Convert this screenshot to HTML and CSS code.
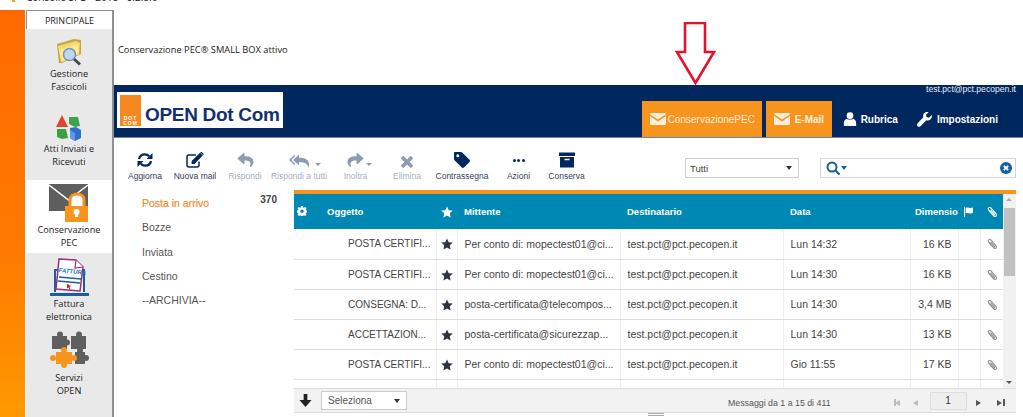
FILE: index.html
```html
<!DOCTYPE html>
<html lang="en">
<head>
  <meta charset="UTF-8">
  <title>Conservazione PEC</title>
  <link rel="stylesheet" href="styles.css">
</head>
<body>
  <svg class="sprites" xmlns="http://www.w3.org/2000/svg">
    <symbol id="i-env" viewBox="0 0 16 12"><path d="M0 1.2C0 .5.5 0 1.2 0h13.6c.7 0 1.2.5 1.2 1.2L8 6.6z"/><path d="M0 3v7.8c0 .7.5 1.2 1.2 1.2h13.6c.7 0 1.2-.5 1.2-1.2V3L8 8.4z"/></symbol>
    <symbol id="i-user" viewBox="0 0 16 16"><circle cx="8" cy="4.2" r="3.8"/><path d="M1 16v-3.5C1 9.500 3 8 4.500 7.600 6 9 10 9 11.500 7.600 13 8 15 9.500 15 12.500V16z"/></symbol>
    <symbol id="i-wrench" viewBox="0 0 16 16"><path d="M15.800 3.200 12.800 6l-2.600-.6-.7-2.500L12.400.3C10.500-.4 8.300.2 7.300 1.700 6.400 3 6.400 4.400 6.800 5.600L.6 12.100c-.8.900-.8 2.200 0 3 .9.900 2.200.9 3.100 0l6.300-6.300c1.600.5 3.300.1 4.500-1.100 1.200-1.200 1.600-3 1.300-4.500z"/></symbol>
    <symbol id="i-refresh" viewBox="0 0 16 16"><path fill="none" stroke="currentColor" stroke-width="2.300" d="M2 7c.6-2.800 2.900-4.700 5.800-4.700 1.800 0 3.300.7 4.300 2M14 9c-.6 2.800-2.900 4.700-5.800 4.700-1.800 0-3.300-.7-4.300-2"/><path d="M15.500 1v6h-6zM.5 15V9h6z"/></symbol>
    <symbol id="i-edit" viewBox="0 0 18 16"><path fill="none" stroke="currentColor" stroke-width="1.500" d="M13 9.500V13c0 1.100-.8 1.900-1.900 1.900H3C1.900 14.900 1 14 1 13V5c0-1.100.9-1.900 2-1.900h7"/><path d="M14 .8l2.800 2.800L8.500 12H5.600V9zM14.800 0c.4-.2.700-.2 1 0l1.700 1.700c.3.3.3.7 0 1l-.5.400-2.700-2.700z"/></symbol>
    <symbol id="i-reply" viewBox="0 0 512 512"><path d="M8.309 189.836L184.313 37.851C199.719 24.546 224 35.347 224 56.015v80.053c160.629 1.839 288 34.032 288 186.258 0 61.441-39.581 122.309-83.333 154.132-13.653 9.931-33.111-2.533-28.077-18.631 45.344-145.012-21.507-183.51-176.59-185.742V360c0 20.7-24.3 31.453-39.687 18.164l-176.004-152c-11.071-9.562-11.086-26.753 0-36.328z"/></symbol>
    <symbol id="i-replyall" viewBox="0 0 20 14"><path d="M6 .8v1.800L2.400 6 6 9.400v1.800L0 6zM10 .8v3C15.800 3.800 20 5.400 20 10.500c0 1.400-.5 2.500-1.200 3.500.7-4.100-2.600-5.800-8.800-5.800v3L4 6z"/></symbol>
    <symbol id="i-times" viewBox="0 0 12 12"><path d="M3 .4 6 3.400 9 .4c.4-.4 1-.4 1.400 0l1.200 1.200c.4.400.4 1 0 1.400L8.600 6l3 3c.4.400.4 1 0 1.400l-1.200 1.200c-.4.400-1 .4-1.400 0l-3-3-3 3c-.4.400-1 .4-1.400 0L.4 10.400c-.4-.4-.4-1 0-1.400l3-3-3-3c-.4-.4-.4-1 0-1.400L1.600.4C2 0 2.600 0 3 .4z"/></symbol>
    <symbol id="i-tag" viewBox="0 0 16 16"><path fill-rule="evenodd" d="M1 0h6c.5 0 .9.200 1.200.5l7.300 7.300c.6.600.6 1.600 0 2.200l-5.500 5.500c-.6.600-1.600.6-2.200 0L.5 8.200C.2 7.900 0 7.500 0 7V1c0-.6.400-1 1-1zM3.800 2.300a1.500 1.500 0 1 0 0 3 1.500 1.500 0 0 0 0-3z"/></symbol>
    <symbol id="i-archive" viewBox="0 0 16 16"><path d="M0 .5h16v3.500H0zM1 5h14v10.500H1zM5.500 6.800v1.500h5V6.800z" fill-rule="evenodd"/></symbol>
    <symbol id="i-star" viewBox="0 0 16 16"><path d="M8 .5l2.300 5 5.400.6-4 3.700 1.100 5.400L8 12.500l-4.800 2.700 1.100-5.400-4-3.700 5.400-.6z"/></symbol>
    <symbol id="i-clip" viewBox="0 0 16 16"><path fill="none" stroke="currentColor" stroke-width="1.500" d="M3.500 5.500 10 13c1 1.200 2.400 1.300 3.300.5.900-.8.800-2.100-.1-3.200L6.500 2.500C5.800 1.700 4.700 1.500 3.800 2.200 2.900 2.900 2.800 4 3.500 4.900l6.200 7.200c.4.500 1 .6 1.400.2.400-.3.400-.9 0-1.400L6 5"/></symbol>
    <symbol id="i-cog" viewBox="0 0 16 16"><path fill-rule="evenodd" d="M6.500 0h3l.4 2.200 1.300.6L13.100 1.500l2.100 2.100-1.300 1.900.6 1.300 2.200.4v3l-2.200.4-.6 1.300 1.300 1.900-2.100 2.100-1.900-1.300-1.300.6-.4 2.200h-3l-.4-2.200-1.300-.6-1.900 1.300L.8 13.900l1.300-1.900-.6-1.300L-.7 10.300v-3l2.200-.4.600-1.300L.8 3.600l2.100-2.100 1.900 1.300 1.300-.6zM8 5.500a2.800 2.800 0 1 0 0 5.600 2.800 2.800 0 0 0 0-5.600z"/></symbol>
    <symbol id="i-flag" viewBox="0 0 16 14"><path d="M0 0h1.500v14H0zM2.500 1c3-1.500 5.500 1 10.500-.5v8c-5 1.500-7.500-1-10.500.5z"/></symbol>
    <symbol id="i-down" viewBox="0 0 14 14"><path d="M5 0h4v6.500h4.500L7 14 .5 6.500H5z"/></symbol>
  </svg>

  <div class="titlebar">
    <span class="title-icon"></span>
    <span class="title-text">Consolle SFO - 2018 - 6.2.8.0</span>
  </div>

  <div class="app">
    <div class="stripe"></div>

    <nav class="sidebar">
      <div class="side-tab">PRINCIPALE</div>

      <a class="side-item side-item-tall">
        <svg class="side-icon" width="27" height="27" viewBox="0 0 27 27">
          <path d="M1 5 18 0l7 1v14L6 24H3z" fill="#c9a53c"/>
          <path d="M2 7 20 2l4 2-1 11L5 23z" fill="#f6d976"/>
          <path d="M3 11 22 5 23 15 6 23z" fill="#fbe89a"/>
          <circle cx="13.500" cy="15.500" r="6" fill="#bcd7ef" stroke="#7c93ad" stroke-width="1.500"/>
          <path d="M18 20l6 5.500" stroke="#444a55" stroke-width="3"/>
        </svg>
        <span>Gestione<br>Fascicoli</span>
      </a>

      <a class="side-item side-item-tall">
        <svg class="side-icon" width="26" height="26" viewBox="0 0 26 26">
          <path d="M6 0l6 12H0z" fill="#e2452f"/>
          <path d="M13 2h9l2 9-5 1-6-3z" fill="#3da64a"/>
          <path d="M1 14h9l2 9-6 1-5-2z" fill="#37a33f"/>
          <path d="M14 13l6-1 5 3v8l-6 3-5-3z" fill="#2f6fc9"/>
          <path d="M14 15l5 3v8l-5-3z" fill="#5c9be6"/>
        </svg>
        <span>Atti Inviati e<br>Ricevuti</span>
      </a>

      <a class="side-item side-item-active">
        <svg class="side-icon" width="40" height="38" viewBox="0 0 40 38">
          <path d="M0 0h39v27H0z" fill="#5e5e5e"/>
          <path d="M0 1l19.500 15L39 1" fill="none" stroke="#fff" stroke-width="1.500"/>
          <path d="M21 23v-7c0-8 14-8 14 0v7" fill="#fff" stroke="#f7941d" stroke-width="3"/>
          <rect x="16" y="22" width="23" height="16" fill="#f7941d"/>
          <circle cx="27.500" cy="28" r="3" fill="#fff"/>
          <path d="M26.300 29h2.400l.5 4h-3.400z" fill="#fff"/>
        </svg>
        <span>Conservazione<br>PEC</span>
      </a>

      <a class="side-item">
        <svg class="side-icon" width="39" height="38" viewBox="0 0 39 38">
          <path d="M5 34V12h29v22" fill="#eaf1f8" stroke="#1b5f9e" stroke-width="2"/>
          <path d="M0 35h39v3H0z" fill="#1b5f9e"/>
          <path d="M9 1l17 1 7 7-3 24-24-2z" fill="#fff" stroke="#a02a7c" stroke-width="1.500"/>
          <path d="M26 2l-1 8 8-1" fill="#fff" stroke="#a02a7c" stroke-width="1.200"/>
          <text x="8.500" y="14" class="fattura-word" transform="rotate(6 8 14)">FATTURA</text>
          <path d="M9 19l22 2M8 23l22 2" stroke="#1b5f9e" stroke-width="1.500"/>
          <path d="M17 26l4 2-1.500 1 1 2-1 .5-1-2-1.500 1z" fill="#c22"/>
        </svg>
        <span>Fattura<br>elettronica</span>
      </a>

      <a class="side-item">
        <svg class="side-icon side-icon-puzzle" width="39" height="37" viewBox="0 0 39 37">
          <g fill="#5f5f5f">
            <rect x="2" y="5" width="15" height="13"/>
            <circle cx="10" cy="3.500" r="3"/>
            <circle cx="17" cy="11.500" r="3"/>
            <rect x="21" y="5" width="15" height="13"/>
            <circle cx="29" cy="3.500" r="3"/>
            <rect x="25" y="21" width="10" height="12"/>
            <circle cx="30" cy="19.500" r="3"/>
            <circle cx="36" cy="27" r="3"/>
          </g>
          <g fill="#f7941d">
            <rect x="6" y="21" width="16" height="12"/>
            <circle cx="14" cy="19" r="3"/>
            <circle cx="3" cy="27" r="3"/>
            <circle cx="24" cy="27" r="3"/>
            <circle cx="14" cy="34" r="3"/>
          </g>
        </svg>
        <span>Servizi<br>OPEN</span>
      </a>
    </nav>

    <main class="main">
      <div class="notice">Conservazione PEC® SMALL BOX attivo</div>

      <svg class="red-arrow" width="41" height="64" viewBox="0 0 41 64">
        <path d="M10 1h20v29h9L20.500 61 2 30h8z" fill="#fff" stroke="#e8112d" stroke-width="2.600"/>
      </svg>

      <header class="topbar">
        <div class="logo">
          <div class="logo-mark">
            <span>DOT</span>
            <span>COM</span>
          </div>
          <span class="logo-name">OPEN Dot Com</span>
        </div>
        <div class="topbar-right">
          <div class="account">test.pct@pct.pecopen.it</div>
          <div class="tabs">
            <a class="tab tab-on tab-pec"><svg width="16" height="12"><use href="#i-env"/></svg>ConservazionePEC</a>
            <a class="tab tab-on tab-mail"><svg width="16" height="12"><use href="#i-env"/></svg>E-Mail</a>
            <a class="tab tab-book"><svg width="14" height="14"><use href="#i-user"/></svg>Rubrica</a>
            <a class="tab tab-set"><svg width="15" height="15"><use href="#i-wrench"/></svg>Impostazioni</a>
          </div>
        </div>
      </header>

      <div class="toolbar">
        <div class="tools">
          <a class="tool"><svg width="16" height="16"><use href="#i-refresh"/></svg>Aggiorna</a>
          <a class="tool"><svg width="18" height="16"><use href="#i-edit"/></svg>Nuova mail</a>
          <a class="tool tool-off"><svg width="17" height="16"><use href="#i-reply"/></svg>Rispondi</a>
          <a class="tool tool-off tool-more"><svg width="20" height="14"><use href="#i-replyall"/></svg>Rispondi a tutti</a>
          <a class="tool tool-off tool-more"><svg class="flip" width="17" height="16"><use href="#i-reply"/></svg>Inoltra</a>
          <a class="tool tool-off"><svg width="12" height="12"><use href="#i-times"/></svg>Elimina</a>
          <a class="tool"><svg width="16" height="16"><use href="#i-tag"/></svg>Contrassegna</a>
          <a class="tool"><span class="dots"><i></i><i></i><i></i></span>Azioni</a>
          <a class="tool"><svg width="16" height="16"><use href="#i-archive"/></svg>Conserva</a>
        </div>
        <div class="filter-select">Tutti<span class="caret"></span></div>
        <div class="search">
          <svg width="14" height="14" viewBox="0 0 14 14"><circle cx="6" cy="6" r="4.500" fill="none" stroke="#17609c" stroke-width="2"/><path d="M9 9l4.500 4.500" stroke="#17609c" stroke-width="2.200"/></svg>
          <span class="caret caret-blue"></span>
          <svg class="search-clear" width="12" height="12" viewBox="0 0 12 12"><circle cx="6" cy="6" r="6" fill="#17609c"/><path d="M3.800 3.800l4.400 4.400M8.200 3.800 3.800 8.200" stroke="#fff" stroke-width="1.800"/></svg>
        </div>
      </div>

      <div class="content">
        <ul class="folders">
          <li class="folder-on">Posta in arrivo<b>370</b></li>
          <li>Bozze</li>
          <li>Inviata</li>
          <li>Cestino</li>
          <li>--ARCHIVIA--</li>
        </ul>

        <section class="mail">
          <div class="mail-body">
            <div class="mail-table">
              <table>
                <colgroup>
                  <col class="c-subject"><col class="c-star"><col class="c-from"><col class="c-to"><col class="c-date"><col class="c-size"><col class="c-flag"><col class="c-clip">
                </colgroup>
                <thead>
                  <tr>
                    <th class="th-subject"><svg class="th-cog" width="10" height="10"><use href="#i-cog"/></svg>Oggetto</th>
                    <th class="center"><svg width="12" height="12"><use href="#i-star"/></svg></th>
                    <th>Mittente</th>
                    <th>Destinatario</th>
                    <th>Data</th>
                    <th class="th-size">Dimensioni</th>
                    <th class="center"><svg width="11" height="10"><use href="#i-flag"/></svg></th>
                    <th class="center"><svg class="clip" width="12" height="12"><use href="#i-clip"/></svg></th>
                  </tr>
                </thead>
                <tbody>
                  <tr>
                    <td class="subject">POSTA CERTIFI...</td>
                    <td class="center"><svg width="12" height="12"><use href="#i-star"/></svg></td>
                    <td>Per conto di: mopectest01@ci...</td>
                    <td>test.pct@pct.pecopen.it</td>
                    <td>Lun 14:32</td>
                    <td class="size">16 KB</td>
                    <td></td>
                    <td class="center"><svg class="clip" width="12" height="12"><use href="#i-clip"/></svg></td>
                  </tr>
                  <tr>
                    <td class="subject">POSTA CERTIFI...</td>
                    <td class="center"><svg width="12" height="12"><use href="#i-star"/></svg></td>
                    <td>Per conto di: mopectest01@ci...</td>
                    <td>test.pct@pct.pecopen.it</td>
                    <td>Lun 14:30</td>
                    <td class="size">16 KB</td>
                    <td></td>
                    <td class="center"><svg class="clip" width="12" height="12"><use href="#i-clip"/></svg></td>
                  </tr>
                  <tr>
                    <td class="subject">CONSEGNA: D...</td>
                    <td class="center"><svg width="12" height="12"><use href="#i-star"/></svg></td>
                    <td>posta-certificata@telecompos...</td>
                    <td>test.pct@pct.pecopen.it</td>
                    <td>Lun 14:30</td>
                    <td class="size">3,4 MB</td>
                    <td></td>
                    <td class="center"><svg class="clip" width="12" height="12"><use href="#i-clip"/></svg></td>
                  </tr>
                  <tr>
                    <td class="subject">ACCETTAZION...</td>
                    <td class="center"><svg width="12" height="12"><use href="#i-star"/></svg></td>
                    <td>posta-certificata@sicurezzap...</td>
                    <td>test.pct@pct.pecopen.it</td>
                    <td>Lun 14:30</td>
                    <td class="size">13 KB</td>
                    <td></td>
                    <td class="center"><svg class="clip" width="12" height="12"><use href="#i-clip"/></svg></td>
                  </tr>
                  <tr>
                    <td class="subject">POSTA CERTIFI...</td>
                    <td class="center"><svg width="12" height="12"><use href="#i-star"/></svg></td>
                    <td>Per conto di: mopectest01@ci...</td>
                    <td>test.pct@pct.pecopen.it</td>
                    <td>Gio 11:55</td>
                    <td class="size">17 KB</td>
                    <td></td>
                    <td class="center"><svg class="clip" width="12" height="12"><use href="#i-clip"/></svg></td>
                  </tr>
                  <tr>
                    <td></td><td></td><td></td><td></td><td></td><td></td><td></td><td></td>
                  </tr>
                </tbody>
              </table>
            </div>
            <div class="scroll">
              <span class="scroll-up"></span>
              <span class="scroll-thumb"></span>
              <span class="scroll-down"></span>
            </div>
          </div>

          <div class="mail-foot">
            <svg class="foot-down" width="13" height="13"><use href="#i-down"/></svg>
            <div class="foot-select">Seleziona<span class="caret"></span></div>
            <div class="foot-count">Messaggi da 1 a 15 di 411</div>
            <div class="pager">
              <span class="pg pg-off pg-first"></span>
              <span class="pg pg-off pg-prev"></span>
              <span class="pg-input">1</span>
              <span class="pg pg-next"></span>
              <span class="pg pg-last"></span>
            </div>
          </div>
          <div class="grip"></div>
        </section>
      </div>
    </main>
  </div>
</body>
</html>
```

FILE: styles.css
```css
* {
  box-sizing: border-box;
}
html, body {
  height: 100%;
}
body {
  margin: 0;
  overflow: hidden;
  font-family: "Liberation Sans", Arial, sans-serif;
  font-size: 10px;
  color: #444;
  background-color: white;
}
.sprites {
  display: none;
}
svg {
  fill: currentColor;
  display: block;
}

/* window title, only its lower edge is in the shot */
.titlebar {
  height: 10px;
  overflow: hidden;
  display: flex;
  padding-left: 12px;
}
.title-icon {
  width: 3px;
  height: 2px;
  margin-right: 11px;
  background-color: #e8a33c;
}
.title-text {
  font-family: "Open Sans", sans-serif;
  font-size: 10px;
  line-height: 12px;
  margin-top: -9px;
  color: #222;
}

.app {
  display: flex;
  height: 407px;
}
.stripe {
  width: 25px;
  background: linear-gradient(#ff6a00, #ff7a00 60%, #ff9900);
}

/* left menu */
.sidebar {
  width: 88px;
  margin-left: 1px;
  background-color: #e9e9e9;
  border-right: 2px solid #8f8f8f;
  font-family: "Open Sans", sans-serif;
  font-size: 9.200px;
  line-height: 13px;
  color: #222;
  text-align: center;
}
.side-tab {
  height: 19px;
  line-height: 20px;
  background-color: white;
  border-top: 1px solid #8f8f8f;
  border-left: 1px solid #8f8f8f;
  font-size: 9px;
}
.side-item {
  display: flex;
  flex-direction: column;
  justify-content: flex-end;
  align-items: center;
  height: 74px;
  padding-bottom: 4px;
}
.side-item-tall {
  height: 75.500px;
  padding-bottom: 12px;
}
.side-item-active {
  height: 73px;
  background-color: white;
}
.side-icon {
  margin-bottom: 1px;
}
.side-icon-puzzle {
  margin-bottom: 3px;
}
.fattura-word {
  font-family: "Liberation Sans", sans-serif;
  font-size: 6px;
  font-weight: bold;
  font-style: italic;
  fill: #1b6fb5;
}

.main {
  position: relative;
  width: 909px;
  display: flex;
  flex-direction: column;
}
.notice {
  height: 75px;
  padding: 33px 0 0 4px;
  font-family: "Open Sans", sans-serif;
  font-size: 9.300px;
  line-height: 13px;
  color: #222;
}
.red-arrow {
  position: absolute;
  left: 561px;
  top: 12px;
}

/* navy bar */
.topbar {
  height: 53px;
  display: flex;
  justify-content: space-between;
  background-color: #00285f;
  border-bottom: 1px solid #6f86a6;
}
.logo {
  width: 166px;
  height: 36px;
  margin: 7px 0 0 3px;
  padding: 3px 2px 0 3px;
  display: flex;
  align-items: flex-end;
  gap: 4px;
  background-color: white;
}
.logo-mark {
  flex: none;
  width: 21px;
  height: 31px;
  margin-bottom: 2px;
  background-color: #f5881f;
  display: flex;
  flex-direction: column;
  justify-content: flex-end;
  font-size: 5px;
  line-height: 5px;
  font-weight: bold;
  letter-spacing: 1px;
  text-align: center;
  color: white;
}
.logo-name {
  font-size: 19px;
  line-height: 26px;
  font-weight: bold;
  letter-spacing: -0.300px;
  white-space: nowrap;
  color: #14306f;
}
.topbar-right {
  display: flex;
  flex-direction: column;
  align-items: flex-end;
}
.account {
  height: 16px;
  padding-right: 7px;
  font-size: 8.600px;
  line-height: 9px;
  color: #e8ecf2;
}
.tabs {
  display: flex;
  height: 36px;
  padding-right: 25px;
}
.tab {
  display: flex;
  align-items: center;
  font-size: 10px;
  font-weight: bold;
  color: white;
  white-space: nowrap;
}
.tab-on {
  background-color: #f7941d;
  color: #ffeedd;
}
.tab-pec {
  width: 120px;
  padding-left: 8px;
  gap: 2px;
  font-weight: normal;
}
.tab-mail {
  width: 66px;
  margin-left: 4px;
  padding-left: 8px;
  gap: 5px;
}
.tab-book {
  margin-left: 11px;
  gap: 4px;
}
.tab-set {
  margin-left: 19px;
  gap: 5px;
}

/* toolbar */
.toolbar {
  height: 52px;
  display: flex;
  align-items: flex-start;
  padding-left: 8px;
}
.tools {
  display: grid;
  grid-template-columns: 46px 54px 46px 62px 51px 52px 58px 55px 41px;
  padding-top: 14px;
}
.tool {
  position: relative;
  display: flex;
  flex-direction: column;
  align-items: center;
  justify-content: flex-end;
  height: 29px;
  gap: 2px;
  font-size: 8.500px;
  line-height: 10px;
  white-space: nowrap;
  color: #33435c;
}
.tool svg, .tool .dots {
  margin-bottom: 1px;
  color: #00285f;
}
.tool-off {
  color: #a6b0bf;
}
.tool-off svg {
  color: #8d9cb3;
}
.tool-more::after {
  content: "";
  position: absolute;
  top: 11px;
  right: 9px;
  border: 3px solid transparent;
  border-top: 3px solid #8d9cb3;
}
.flip {
  transform: scaleX(-1);
}
.dots {
  display: flex;
  gap: 1.500px;
  height: 16px;
  align-items: center;
}
.dots i {
  width: 3px;
  height: 3px;
  border-radius: 50%;
  background-color: #00285f;
}
.caret {
  border: 3px solid transparent;
  border-top: 4px solid #333;
  border-bottom: 0;
}
.filter-select {
  width: 114px;
  height: 20px;
  margin: 20px 0 0 98px;
  padding: 0 6px 0 4px;
  display: flex;
  align-items: center;
  justify-content: space-between;
  border: 1px solid #d0d0d0;
  font-size: 9.500px;
}
.search {
  width: 196px;
  height: 20px;
  margin: 20px 0 0 21px;
  padding: 0 3px 0 5px;
  display: flex;
  align-items: center;
  gap: 1px;
  border: 1px solid #cfd8e2;
}
.caret-blue {
  border-top-color: #17609c;
}
.search-clear {
  margin-left: auto;
}

.content {
  display: flex;
  height: 227px;
}

/* folders */
.folders {
  width: 180px;
  margin: 0;
  padding: 1px 17px 0 28px;
  list-style: none;
  font-size: 10.500px;
  color: #555;
}
.folders li {
  position: relative;
  height: 24.300px;
  line-height: 24px;
}
.folder-on {
  color: #f58a1f;
  -webkit-text-stroke: 0.2px #f58a1f;
}
.folders b {
  position: absolute;
  right: 0;
  top: -3px;
  font-size: 10px;
  color: #444;
  -webkit-text-stroke: 0;
}

/* mail grid */
.mail {
  position: relative;
  width: 722px;
  border-top: 4px solid #f7941d;
}
.mail-body {
  display: flex;
  height: 194px;
}
.mail-table {
  width: 709px;
  height: 194px;
  overflow: hidden;
}
table {
  width: 709px;
  table-layout: fixed;
  border-collapse: collapse;
}
.c-subject { width: 142px; }
.c-star { width: 21px; }
.c-from { width: 163px; }
.c-to { width: 163px; }
.c-date { width: 127px; }
.c-size { width: 48px; }
.c-flag { width: 22px; }
.c-clip { width: 23px; }
th {
  height: 35px;
  padding: 0 0 0 7px;
  overflow: hidden;
  white-space: nowrap;
  text-align: left;
  font-size: 9.500px;
  color: white;
  background-color: #0088b4;
}
th svg, td svg {
  display: inline-block;
  vertical-align: middle;
}
.th-subject {
  padding-left: 33px;
  position: relative;
}
.th-cog {
  position: absolute;
  left: 3px;
  top: 12px;
}
.th-size {
  padding-left: 5px;
}
td {
  height: 30px;
  padding: 0 0 0 7px;
  border-right: 1px solid #eee;
  border-bottom: 1px solid #ddd;
  white-space: nowrap;
  overflow: hidden;
  font-size: 10.500px;
  color: #444;
}
td svg {
  color: #2c3444;
}
td.subject {
  padding-left: 54px;
  font-size: 10px;
}
td.size {
  padding: 0 6px 0 0;
  text-align: right;
}
.center, td.center, th.center {
  padding: 0;
  text-align: center;
}
td .clip {
  color: #8a8f98;
}
.scroll {
  width: 13px;
  height: 194px;
  position: relative;
  background-color: #f1f1f1;
}
.scroll-up, .scroll-down {
  position: absolute;
  left: 3px;
  border: 3px solid transparent;
}
.scroll-up {
  top: 1px;
  border-bottom: 3px solid #aaa;
}
.scroll-down {
  bottom: 1px;
  border-top: 3px solid #555;
}
.scroll-thumb {
  position: absolute;
  left: 1px;
  top: 14px;
  width: 11px;
  height: 68px;
  background-color: #c1c1c1;
}
.mail-foot {
  height: 25px;
  display: flex;
  align-items: center;
  background-color: #f2f2f2;
  border-top: 1px solid #ddd;
  border-bottom: 1px solid #ddd;
}
.foot-down {
  margin-left: 5px;
  color: #222;
}
.foot-select {
  width: 86px;
  height: 19px;
  margin-left: 9px;
  padding: 0 6px;
  display: flex;
  align-items: center;
  justify-content: space-between;
  background-color: white;
  border: 1px solid #ccc;
  font-size: 10px;
  color: #555;
}
.foot-count {
  margin-left: 321px;
  padding-top: 4px;
  font-size: 8.800px;
  color: #555;
}
.pager {
  margin-left: 63px;
  display: flex;
  align-items: center;
}
.pg {
  position: relative;
  width: 8px;
  height: 8px;
  margin-top: 4px;
}
.pg::before {
  content: "";
  position: absolute;
  top: 1px;
  border: 3px solid transparent;
}
.pg-off::before {
  right: 2px;
  border-right: 5px solid #bbb;
  border-left: 0;
}
.pg-next::before {
  left: 2px;
  border-left: 5px solid #555;
  border-right: 0;
}
.pg-last::before {
  left: 0;
  border-left: 5px solid #555;
  border-right: 0;
}
.pg-first {
  border-left: 2px solid #bbb;
  height: 7px;
}
.pg-last {
  border-right: 2px solid #555;
  height: 7px;
  margin-left: 15px;
}
.pg-prev {
  margin-left: 10px;
}
.pg-input {
  width: 37px;
  height: 18px;
  margin: 0 7px 0 10px;
  text-align: center;
  line-height: 15px;
  font-size: 10px;
  background-color: #eee;
  border: 1px solid #ddd;
  color: #333;
}
.grip {
  position: absolute;
  left: 354px;
  top: 219px;
  width: 16px;
  height: 3px;
  border-top: 1px solid #aaa;
  border-bottom: 1px solid #aaa;
}
```
